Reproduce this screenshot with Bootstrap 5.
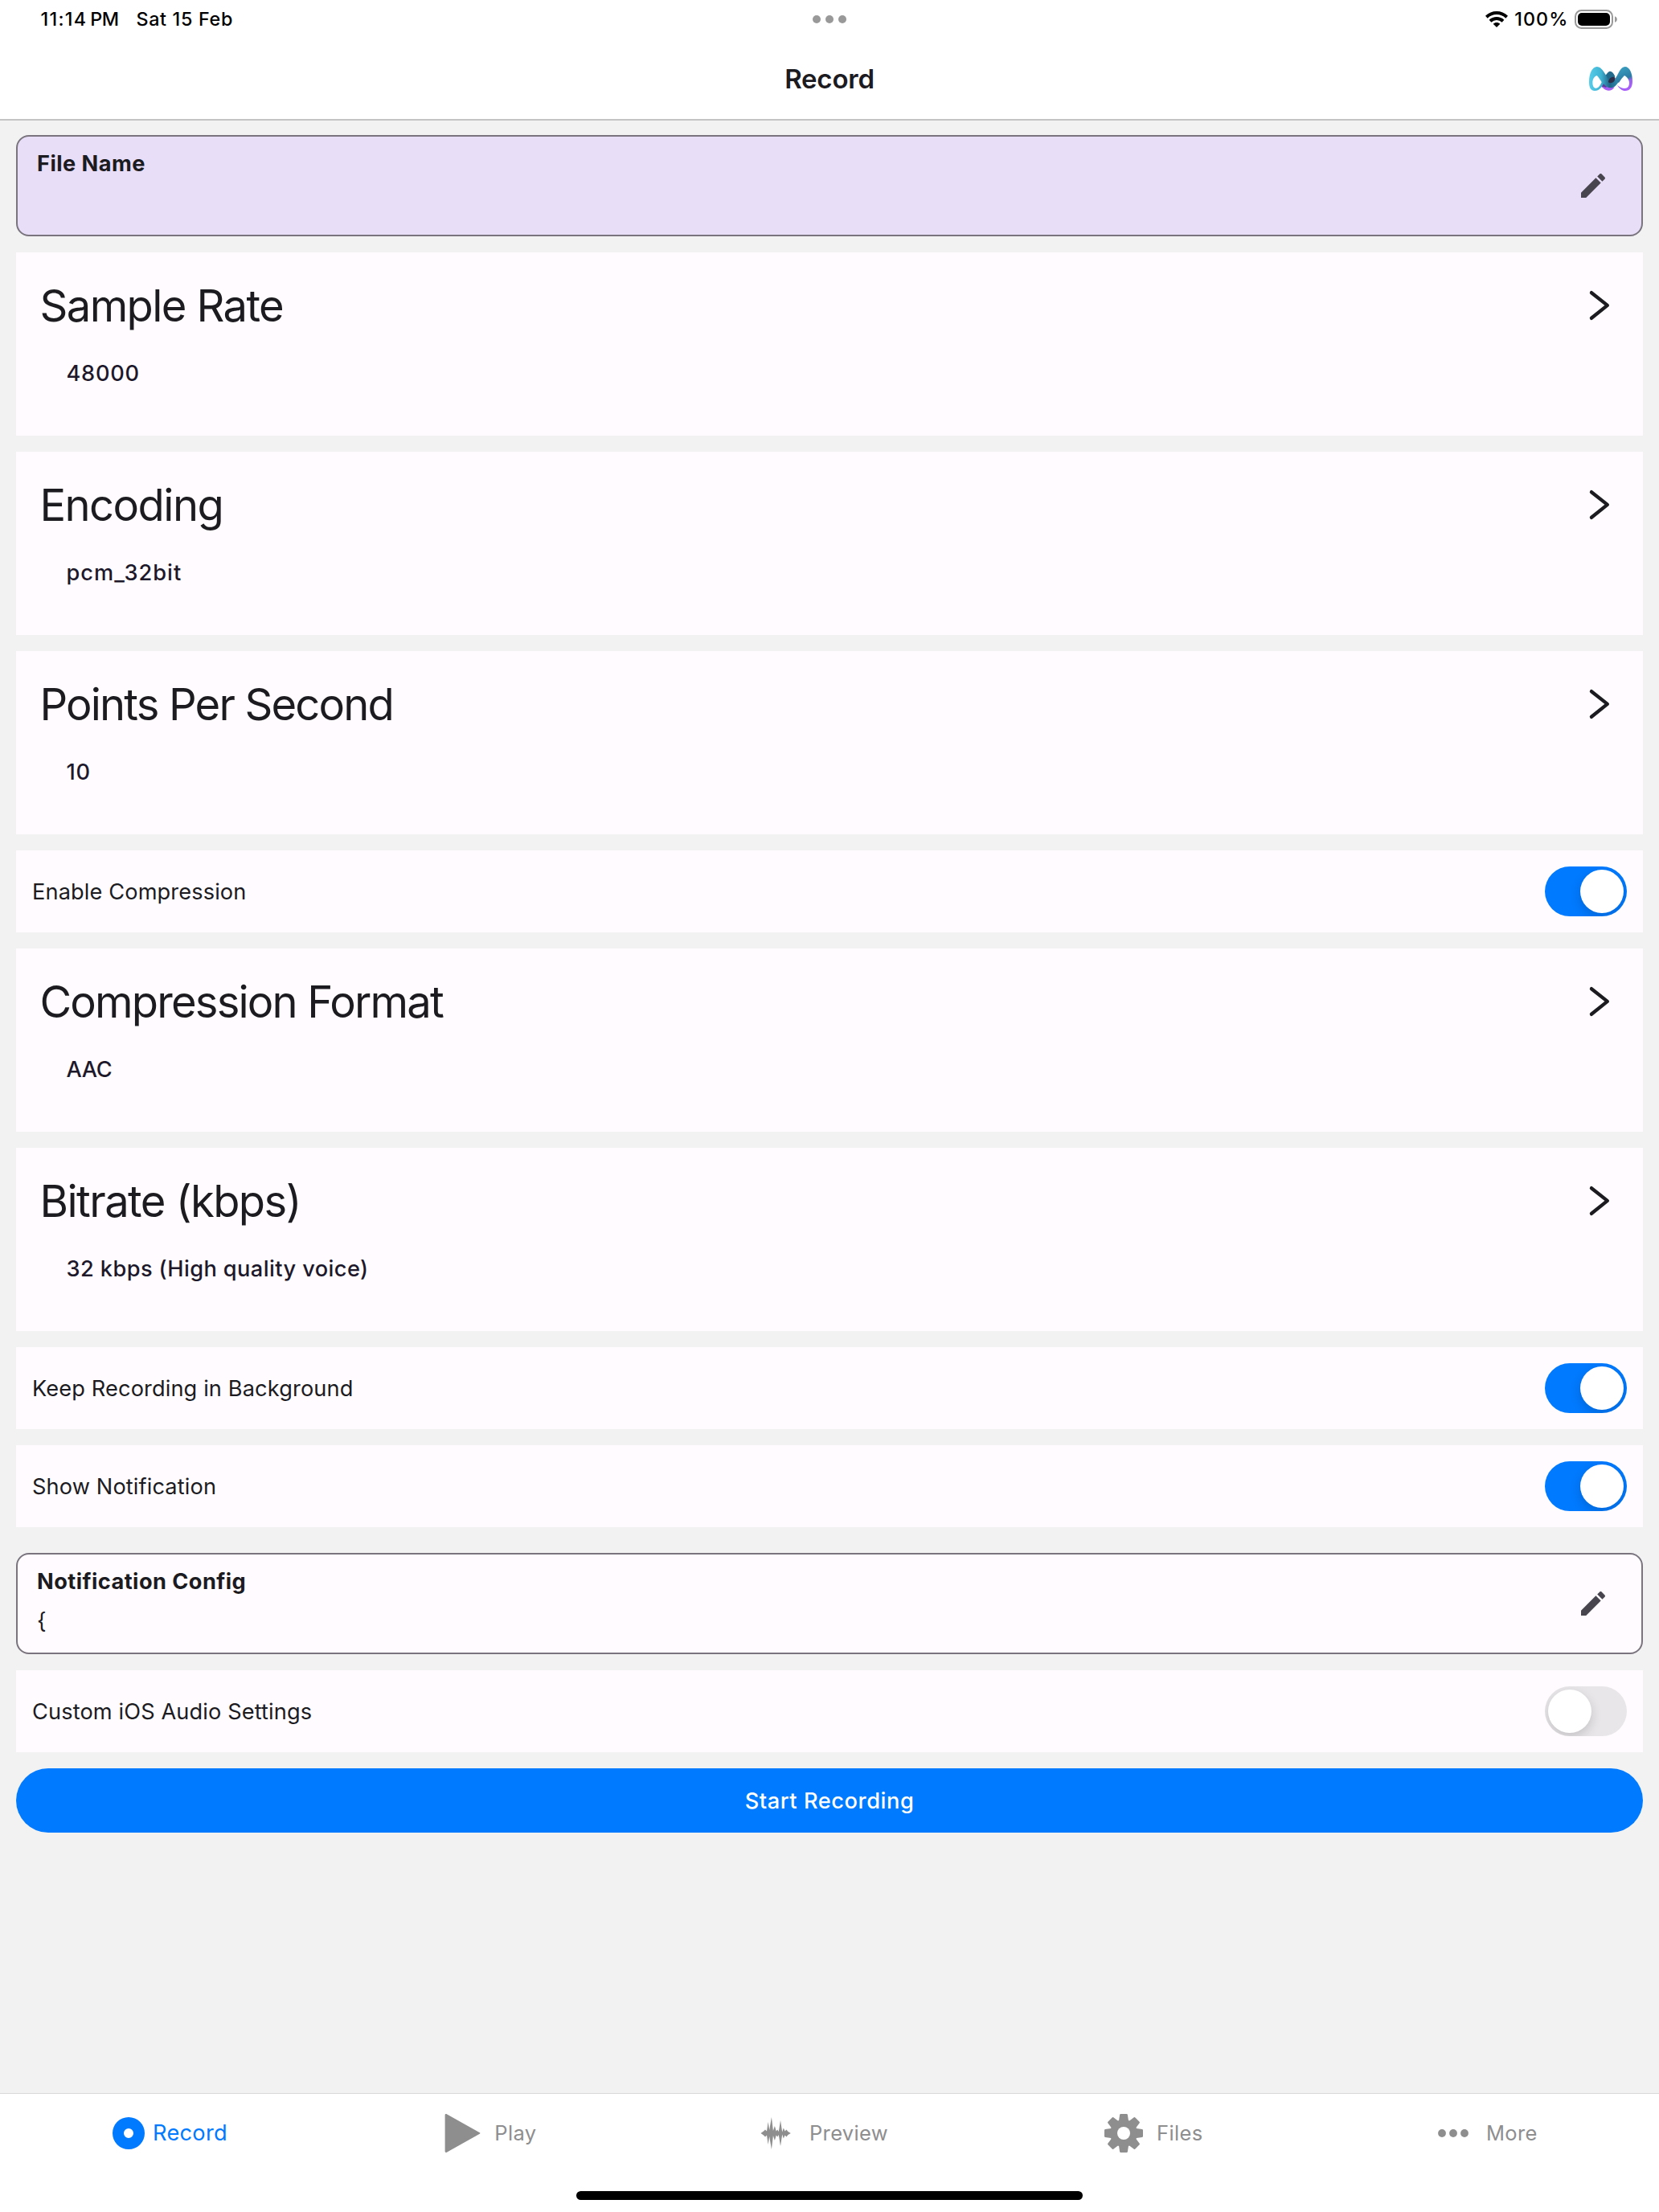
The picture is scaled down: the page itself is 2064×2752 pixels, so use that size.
<!DOCTYPE html>
<html lang="en">
<head>
<meta charset="utf-8">
<meta name="viewport" content="width=device-width, initial-scale=1">
<title>Record</title>
<link href="https://cdn.jsdelivr.net/npm/bootstrap@5.3.0/dist/css/bootstrap.min.css" rel="stylesheet">
<script src="https://cdn.jsdelivr.net/npm/bootstrap@5.3.0/dist/js/bootstrap.bundle.min.js"></script>
<style>
  body { background: #f2f2f2; color: #1c1b1f; font-family: Inter, "Liberation Sans", sans-serif; font-size: 27.2px; letter-spacing: .12px; line-height: 40px; }
  svg { display: block; flex: none; }
  .screen { height: 2752px; overflow: hidden; }
  .app-head { height: 150px; background: #fff; border-bottom: 2px solid #c4c4c4; }
  .status { height: 48px; padding: 0 51px 0 50.5px; font-size: 23.3px; font-weight: 500; line-height: 48px; color: #000; }
  .status > div { flex: 1 1 0; }
  .clock { letter-spacing: 1.3px; margin-right: 3.8px; }
  .ampm { letter-spacing: -.45px; margin-right: 22px; }
  .day { letter-spacing: .68px; }
  .pct { letter-spacing: 1.08px; margin: 0 7.6px 0 8px; }
  .title-row { height: 100px; padding: 0 33px; }
  .title-row > div { flex: 1 1 0; }
  .title-row h1 { font-size: 33px; font-weight: 600; letter-spacing: -.2px; line-height: 100px; }
  .form-col { padding: 18px 20px 0; gap: 20px; }
  .field { height: 126px; border: 2px solid #79747e; border-radius: 16px; background: #fffbff; padding: 14px 40px 0 24px; }
  .field.is-empty { background: #e8def8; }
  .field .cap { font-weight: 700; letter-spacing: .44px; }
  .field .val { margin-top: 9px; }
  .field svg { margin-top: 27px; }
  .after-rows { margin-top: 12px; }
  .choice { height: 228px; background: #fffbff; padding: 32px 40px 0 29.5px; }
  .choice h2 { font-size: 54.3px; font-weight: 400; line-height: 68px; letter-spacing: -1.6px; }
  .choice p { margin: 26px 0 0 33px; line-height: 50px; font-weight: 500; letter-spacing: .42px; color: #1d192b; }
  .choice h2.ls-wide { letter-spacing: -1.55px; }
  .choice h2.ls-mid { letter-spacing: -1.83px; }
  .choice h2.ls-tight { letter-spacing: -1.82px; }
  .choice p.code { letter-spacing: 1px; }
  .choice p.nums { letter-spacing: .75px; }
  .choice p.caps { letter-spacing: -.35px; }
  .toggle-row { height: 102px; background: #fffbff; padding: 0 20px; }
  .toggle-row .lbl { padding-top: 2px; }
  .switch { width: 102px; height: 62px; border-radius: 31px; background: #007aff; padding: 4px; justify-content: flex-end; overflow: hidden; }
  .switch.off { background: #e8e6e9; justify-content: flex-start; }
  .knob { width: 54px; height: 54px; border-radius: 50%; background: #fff; box-shadow: 0 5px 14px rgba(0,0,0,.16); }
  .btn-record { height: 80px; border-radius: 40px; background: #007aff; color: #fff; font-size: 27.2px; font-weight: 500; letter-spacing: .58px; padding: 1px 0 0; line-height: 79px; border: 0; }
  .tabs { height: 148px; background: #fff; border-top: 1.5px solid #d8d8d8; }
  .tabs .nav { height: 98px; }
  .tabs .nav-item { flex: 0 0 20%; }
  .tabs .nav-link { color: #8e8e8f; font-size: 25.5px; letter-spacing: .35px; padding: 0; line-height: 98px; gap: 16px; }
  .tabs .nav-link.active { color: #007aff; font-size: 27.2px; gap: 5px; letter-spacing: .29px; }
  .t1 { padding-left: 135px; } .t2 { padding-left: 136.5px; } .t3 { padding-left: 115.4px; } .t4 { padding-left: 134.6px; } .t5 { padding-left: 131.8px; }
  .home-bar { width: 630px; height: 11px; border-radius: 6px; background: #000; margin: 22.5px auto 0; }
</style>
</head>
<body>
<svg width="0" height="0" class="position-absolute" aria-hidden="true">
  <symbol id="pencil" viewBox="0 0 24 24"><path fill="#49454f" d="M20.71 7.04c.39-.39.39-1.04 0-1.41l-2.34-2.34c-.37-.39-1.02-.39-1.41 0l-1.84 1.83 3.75 3.75M3 17.25V21h3.75L17.81 9.93l-3.75-3.75L3 17.25z"/></symbol>
  <symbol id="chev" viewBox="0 0 28 40"><path d="M4 4.2 23.8 19.9 4 35.8" fill="none" stroke="#1c1b1f" stroke-width="4.4" stroke-linecap="round" stroke-linejoin="round"/></symbol>
</svg>
<div class="screen d-flex flex-column">
  <header class="app-head">
    <div class="status d-flex align-items-center">
      <div class="d-flex"><span class="clock">11:14</span><span class="ampm">PM</span><span class="day">Sat 15 Feb</span></div>
      <svg width="44" height="12" viewBox="0 0 44 12" fill="#999"><circle cx="6" cy="6" r="5"/><circle cx="22" cy="6" r="5"/><circle cx="38" cy="6" r="5"/></svg>
      <div class="d-flex justify-content-end align-items-center">
        <svg width="28" height="20" viewBox="0 0 28 20"><g fill="none" stroke="#000" stroke-width="4"><path d="M1.3 7.2C8.6.3 19.4.3 26.7 7.2"/><path d="M6 12.2c4.6-4.3 11.4-4.3 16 0"/></g><path d="M14 20 9.7 15.7c2.5-2.2 6.1-2.2 8.6 0z"/></svg>
        <span class="pct">100%</span>
        <svg width="54" height="24" viewBox="0 0 54 24"><rect x="1" y="1" width="46" height="22" rx="7.5" fill="none" stroke="#999" stroke-width="2"/><rect x="4" y="4" width="40" height="16" rx="5"/><path d="M50 8.2c3.8 1.4 3.8 6.2 0 7.6z" fill="#999"/></svg>
      </div>
    </div>
    <div class="title-row d-flex align-items-center">
      <div></div>
      <h1 class="m-0">Record</h1>
      <div class="d-flex justify-content-end">
        <svg width="54" height="30" viewBox="531 249 162 90">
          <defs>
            <linearGradient id="lg1" x1="531" y1="0" x2="650" y2="0" gradientUnits="userSpaceOnUse"><stop offset="0" stop-color="#56cdea"/><stop offset=".38" stop-color="#3fb3d2"/><stop offset=".65" stop-color="#1f6488"/><stop offset="1" stop-color="#3597b9"/></linearGradient>
            <linearGradient id="lg2" x1="650" y1="249" x2="690" y2="339" gradientUnits="userSpaceOnUse"><stop offset="0" stop-color="#3ba0c2"/><stop offset=".48" stop-color="#2c7ca4"/><stop offset=".62" stop-color="#9a62f0"/><stop offset="1" stop-color="#b05cff"/></linearGradient>
          </defs>
          <path d="M574 322c10 6 16 16 30 16 9 0 16-5 22-12l-30-10-10-8z" fill="#a75cf2"/>
          <path d="M574 322l12-16 16 14-8 6z" fill="#5d3a9c"/>
          <path d="M590 285c8-11 13-19 20-19s13 8 18 19l-14 24-12-6z" fill="#216a8c"/>
          <path fill="url(#lg1)" fill-rule="evenodd" d="M560 249c13 0 22 12 31 27 9 15 15 29 24 29 7 0 13-8 20-21l12 13c-12 19-20 31-36 31-10 0-18-6-26-15-7 12-15 26-33 26-14 0-21-12-21-33 0-32 12-57 29-57zM560 282c-10 4-16 14-16 26 0 13 5 21 13 21 9 0 15-9 21-22-5-9-11-18-18-25z"/>
          <path d="M603 304c2-10 9-17 18-17 5 0 8 2 8 6-2 10-9 16-17 17-6 0-10-2-9-6z" fill="#2b2d49"/>
          <path fill="url(#lg2)" d="M665 249c17 0 28 24 28 54 0 23-10 36-27 36-12 0-22-8-30-21 10 8 19 12 28 12 10 0 17-7 17-20 0-12-7-22-18-28-8 7-14 17-21 27l-15-10c12-22 22-50 38-50z"/>
        </svg>
      </div>
    </div>
  </header>

  <main class="form-col d-flex flex-column flex-grow-1">
    <section class="field is-empty d-flex justify-content-between">
      <div><div class="cap">File Name</div></div>
      <svg width="40" height="40"><use href="#pencil"/></svg>
    </section>
    <section class="choice"><div class="d-flex justify-content-between align-items-center"><h2 class="m-0">Sample Rate</h2><svg width="28" height="40"><use href="#chev"/></svg></div><p class="nums">48000</p></section>
    <section class="choice"><div class="d-flex justify-content-between align-items-center"><h2 class="m-0 ls-wide">Encoding</h2><svg width="28" height="40"><use href="#chev"/></svg></div><p class="code">pcm_32bit</p></section>
    <section class="choice"><div class="d-flex justify-content-between align-items-center"><h2 class="m-0 ls-mid">Points Per Second</h2><svg width="28" height="40"><use href="#chev"/></svg></div><p class="nums">10</p></section>
    <section class="toggle-row d-flex justify-content-between align-items-center"><span class="lbl">Enable Compression</span><span class="switch d-flex" role="switch" aria-checked="true"><i class="knob"></i></span></section>
    <section class="choice"><div class="d-flex justify-content-between align-items-center"><h2 class="m-0 ls-tight">Compression Format</h2><svg width="28" height="40"><use href="#chev"/></svg></div><p class="caps">AAC</p></section>
    <section class="choice"><div class="d-flex justify-content-between align-items-center"><h2 class="m-0 ls-wide">Bitrate (kbps)</h2><svg width="28" height="40"><use href="#chev"/></svg></div><p>32 kbps (High quality voice)</p></section>
    <section class="toggle-row d-flex justify-content-between align-items-center"><span class="lbl">Keep Recording in Background</span><span class="switch d-flex" role="switch" aria-checked="true"><i class="knob"></i></span></section>
    <section class="toggle-row d-flex justify-content-between align-items-center"><span class="lbl">Show Notification</span><span class="switch d-flex" role="switch" aria-checked="true"><i class="knob"></i></span></section>
    <section class="field after-rows d-flex justify-content-between">
      <div><div class="cap">Notification Config</div><div class="val">{</div></div>
      <svg width="40" height="40"><use href="#pencil"/></svg>
    </section>
    <section class="toggle-row d-flex justify-content-between align-items-center"><span class="lbl">Custom iOS Audio Settings</span><span class="switch off d-flex" role="switch" aria-checked="false"><i class="knob"></i></span></section>
    <button class="btn btn-record w-100" type="button">Start Recording</button>
  </main>

  <footer class="tabs flex-shrink-0">
    <nav class="nav flex-nowrap">
      <div class="nav-item t1"><a class="nav-link active d-flex align-items-center"><svg width="50" height="50" viewBox="0 0 50 50"><path fill="#007aff" fill-rule="evenodd" d="M25 5a20 20 0 1 1 0 40 20 20 0 0 1 0-40zm0 14a6 6 0 1 0 0 12 6 6 0 0 0 0-12z"/></svg>Record</a></div>
      <div class="nav-item t2"><a class="nav-link d-flex align-items-center"><svg width="50" height="50" viewBox="0 0 50 50"><path fill="#8e8e8f" d="M4.600 2.400c0-1.300 1.200-1.700 2.200-1.100l41 23c.8.4.8 1 0 1.400l-41 23c-1 .6-2.200.2-2.200-1.100z"/></svg>Play</a></div>
      <div class="nav-item t3"><a class="nav-link d-flex align-items-center"><svg width="50" height="50" viewBox="0 0 50 50"><path fill="#8e8e8f" d="M5.500 25 9 22.500l2-2 2 2 1.600-11.500 1.600 10 2.700-16 2 17 2-6 1.800 6.500 1.500-2 1.600 2.500 2.200-14 2.200 14.500 1.600-5 1.800 4 1.800-2 2 2.500 3.400 2-3.400 2-2 2.500-1.800-2-1.800 4-1.600-5-2.200 14.500-2.200-14-1.600 2.500-1.500-2-1.800 6.500-2-6-2 17-2.700-16-1.600 10-1.600-11.500-2 2-2-2z"/></svg>Preview</a></div>
      <div class="nav-item t4"><a class="nav-link d-flex align-items-center"><svg width="50" height="50" viewBox="-25 -25 50 50"><g fill="#8e8e8f"><path id="tooth" d="M-6.200-14-4.900-23q.2-1 1.200-1h7.400q1 0 1.200 1l1.300 9z"/><use href="#tooth" transform="rotate(45)"/><use href="#tooth" transform="rotate(90)"/><use href="#tooth" transform="rotate(135)"/><use href="#tooth" transform="rotate(180)"/><use href="#tooth" transform="rotate(225)"/><use href="#tooth" transform="rotate(270)"/><use href="#tooth" transform="rotate(315)"/><circle r="17"/></g><circle r="8" fill="#fff"/></svg>Files</a></div>
      <div class="nav-item t5"><a class="nav-link d-flex align-items-center"><svg width="50" height="50" viewBox="0 0 50 50" fill="#8e8e8f"><circle cx="11" cy="25" r="4.900"/><circle cx="25" cy="25" r="4.900"/><circle cx="39" cy="25" r="4.900"/></svg>More</a></div>
    </nav>
    <div class="home-bar"></div>
  </footer>
</div>
</body>
</html>
